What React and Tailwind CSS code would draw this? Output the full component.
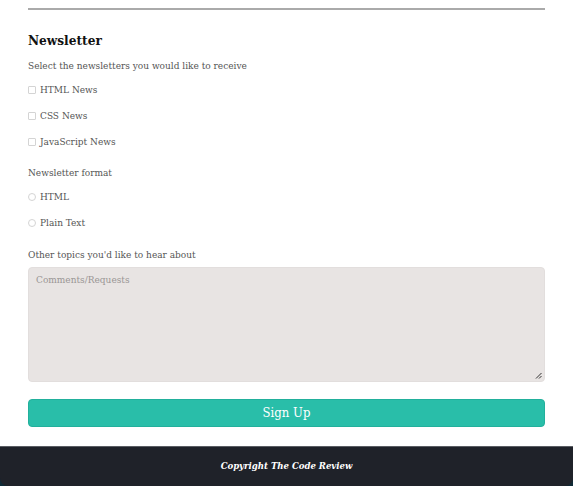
export default function App() {
  const serif = { fontFamily: '"DejaVu Serif Condensed", "DejaVu Serif", serif' };
  return (
    <div className="w-[573px] h-[486px] bg-[#0f2a36] flex flex-col overflow-hidden" style={serif}>
      <div className="bg-white flex-1 px-[28px] pt-[8px] flex flex-col">
        <hr className="border-0 h-[2px] bg-[#aaaaaa]" />
        <h2 className="mt-[21px] text-[13.5px] font-bold leading-[18px] text-[#111]">Newsletter</h2>
        <p className="mt-[10px] text-[10px] leading-[14px] text-[#555]">Select the newsletters you would like to receive</p>
        <div className="mt-[10px] flex flex-col gap-[12px]">
          {['HTML News', 'CSS News', 'JavaScript News'].map((t) => (
            <label key={t} className="flex items-center gap-[4px] text-[10px] leading-[14px] text-[#555]">
              <span className="w-[8px] h-[8px] border border-[#d4d4d4] rounded-[1px] bg-white" />
              {t}
            </label>
          ))}
        </div>
        <p className="mt-[17px] text-[10px] leading-[14px] text-[#555]">Newsletter format</p>
        <div className="mt-[10px] flex flex-col gap-[12px]">
          {['HTML', 'Plain Text'].map((t) => (
            <label key={t} className="flex items-center gap-[4px] text-[10px] leading-[14px] text-[#555]">
              <span className="w-[8px] h-[8px] border border-[#d4d4d4] rounded-full bg-white" />
              {t}
            </label>
          ))}
        </div>
        <p className="mt-[18px] text-[10px] leading-[14px] text-[#555]">Other topics you'd like to hear about</p>
        <div className="mt-[5px] relative h-[115px] bg-[#e8e4e3] rounded-[4px] border border-[#e2dedd]">
          <span className="absolute left-[7px] top-[5px] text-[10px] leading-[14px] text-[#9a9695]">Comments/Requests</span>
          <svg className="absolute right-[2px] bottom-[2px]" width="7" height="7" viewBox="0 0 7 7">
            <path d="M6.5 1 L1 6.5 M6.5 4 L4 6.5" stroke="#333" strokeWidth="1" />
          </svg>
        </div>
        <button className="mt-[17px] h-[28px] bg-[#29bea9] rounded-[4px] border border-[#22b09c] text-white text-[13px] leading-[18px]" style={serif}>Sign Up</button>
      </div>
      <div className="h-[40px] bg-[#1f2229] border-t border-[#5a5d63] rounded-b-[8px] flex items-center justify-center">
        <span className="text-white italic text-[9.5px] font-semibold">Copyright The Code Review</span>
      </div>
    </div>
  );
}
